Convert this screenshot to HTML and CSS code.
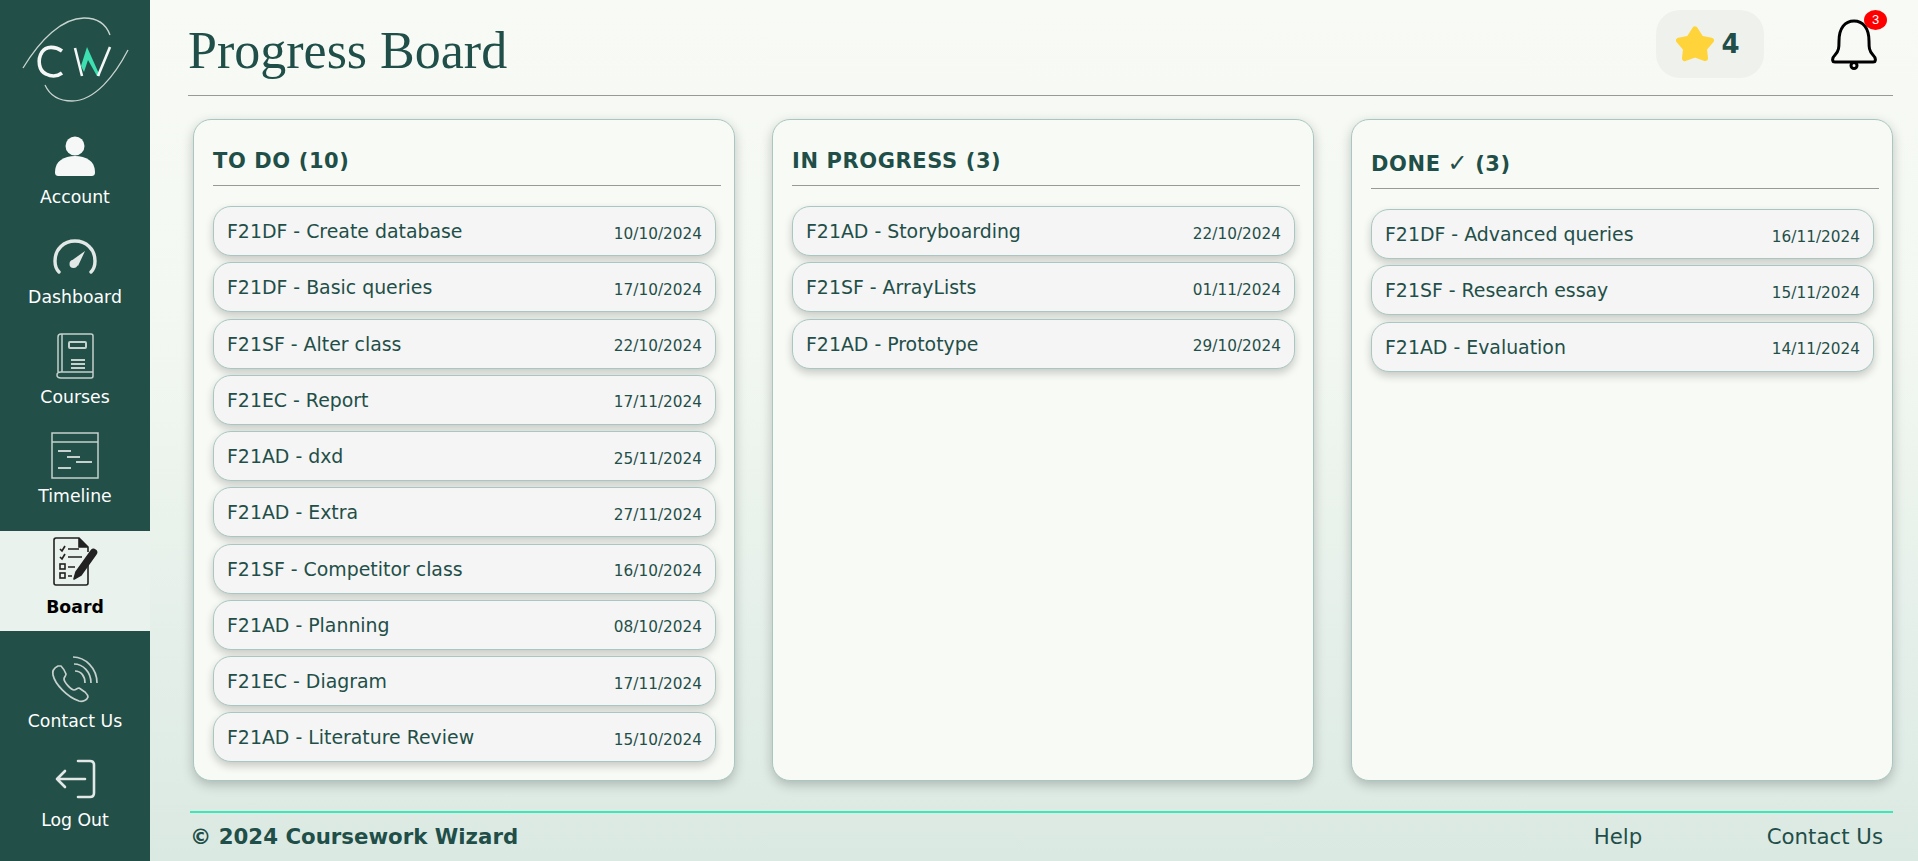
FILE: index.html
```html
<!DOCTYPE html>
<html lang="en">
<head>
    <meta charset="UTF-8">
    <meta name="viewport" content="width=device-width, initial-scale=1.0">
    <title>Progress Board</title>
    <link rel="stylesheet" href="styles.css">
</head>
<body>
    <nav class="sidebar">
        <div class="logo">
            <svg width="112" height="90" viewBox="20 15 112 90" fill="none">
                <path d="M23 68C40 40 62 18 84 18C98 18 106 24 110 35" stroke="#c9d4d0" stroke-width="1.3"/>
                <path d="M45 85C50 96 60 101 72 101C95 101 115 75 128 50" stroke="#c9d4d0" stroke-width="1.3"/>
                <path d="M62 51C55 46 46 46 42 52C37 60 39 71 46 74C52 77 58 76 62 73" stroke="#f4f7f5" stroke-width="3.6"/>
                <path d="M75 48L82 76" stroke="#f4f7f5" stroke-width="2.6"/>
                <path d="M81 66L87 47L100 76H97L88 60L84 72Z" fill="#3de0b0"/>
                <path d="M98 76L110 47" stroke="#f4f7f5" stroke-width="2.6"/>
            </svg>
        </div>
        <a class="nav-item" href="#">
            <svg class="nav-icon" viewBox="0 0 50 50"><circle cx="25" cy="15" r="9.5" fill="#f6f8f7"/><path d="M5 41C5 30 14 25 25 25S45 30 45 41C45 44 44 45 41 45H9C6 45 5 44 5 41Z" fill="#f6f8f7"/></svg>
            <span>Account</span>
        </a>
        <a class="nav-item" href="#">
            <svg class="nav-icon" viewBox="0 0 50 50" fill="none"><path d="M9 41C6 38 5 34 5 30C5 18 14 10 25 10S45 18 45 30C45 34 44 38 41 41" stroke="#e2e8e5" stroke-width="3.4" stroke-linecap="round"/><path d="M35 20L28 35L21 30Z" fill="#e2e8e5"/><circle cx="23.500" cy="33" r="4" fill="#e2e8e5"/></svg>
            <span>Dashboard</span>
        </a>
        <a class="nav-item" href="#">
            <svg class="nav-icon" viewBox="0 0 50 50" fill="none" stroke="#c6d0cc" stroke-width="1.5"><path d="M8 41V6C8 4 9 3 11 3H41C42 3 43 4 43 5V45C43 46 42 47 41 47H11C9 47 7 46 7 44C7 42 9 41 11 41H43"/><path d="M12 3V41"/><rect x="19" y="11" width="17" height="6" rx="1" stroke-width="2"/><path d="M21 29H35M21 33H35M21 37H35" stroke-width="1.8"/></svg>
            <span>Courses</span>
        </a>
        <a class="nav-item nav-item-timeline" href="#">
            <svg class="nav-icon" viewBox="0 0 50 50" fill="none" stroke="#c6d0cc" stroke-width="1.5"><rect x="2" y="3" width="46" height="45"/><path d="M2 12H48"/><path d="M8 21H21M17 27H30M26 32H42M8 38H21" stroke-width="2.2"/></svg>
            <span>Timeline</span>
        </a>
        <a class="nav-item active" href="#">
            <svg class="nav-icon" viewBox="0 0 50 50" fill="none" stroke="#222" stroke-width="1.6"><path d="M38 24V44C38 45 37 46 36 46H6C5 46 4 45 4 44V1C4 0 5 -1 6 -1H29L38 8V13"/><path d="M29 -1V8H38" fill="#222"/><path d="M10 10L12 12L15 7M10 18L12 20L15 15" stroke-width="1.7"/><path d="M18 10H29M18 18H32M18 28H25M18 37H22" stroke-width="1.7"/><rect x="10" y="25" width="5" height="5"/><rect x="10" y="34" width="5" height="5"/><path d="M24 40L26 33L41 12C42 10 44 10 45 11C47 12 47 14 46 15L31 36Z" fill="#222" stroke-linejoin="round"/></svg>
            <span>Board</span>
        </a>
        <a class="nav-item nav-item-contact" href="#">
            <svg class="nav-icon" viewBox="0 0 50 50" fill="none" stroke="#c6d0cc" stroke-width="1.7"><path d="M8 12C4 14 2 17 3 21C5 30 17 43 29 47C33 48 37 46 38 43C38 41 37 40 35 38C33 37 31 35 29 34C27 34 26 36 24 36C21 36 14 28 14 25C14 23 16 22 16 20C15 17 13 14 11 12C10 12 9 12 8 12Z"/><path d="M23 3C35 3 47 14 47 29"/><path d="M24 10C33 10 41 18 41 29"/><path d="M25 17C31 17 35 22 35 29"/></svg>
            <span>Contact Us</span>
        </a>
        <a class="nav-item" href="#">
            <svg class="nav-icon" viewBox="0 0 50 50" fill="none" stroke="#e2e8e5" stroke-width="2.6" stroke-linecap="round" stroke-linejoin="round"><path d="M28 7H40C43 7 44 9 44 11V39C44 41 43 43 40 43H28"/><path d="M7 25H35M15 17L7 25L15 33"/></svg>
            <span>Log Out</span>
        </a>
    </nav>

    <div class="main">
        <header class="topbar">
            <h1>Progress Board</h1>
            <div class="topbar-right">
                <div class="stars">
                    <svg width="38" height="36" viewBox="1.500 2.500 35 32.500"><path d="M19 5L24.500 13.500L34 15.500L27.500 23L28.500 32L19 28.500L9.500 32L10.500 23L4 15.500L13.500 13.500Z" fill="#ffd43b" stroke="#ffd43b" stroke-width="5" stroke-linejoin="round"/></svg>
                    <span>4</span>
                </div>
                <div class="bell">
                    <svg width="48" height="52" viewBox="0 0 48 52" fill="none" stroke="#000" stroke-width="3" stroke-linejoin="round"><path d="M3 42C2 40 3 38 5 36C9 32 9 28 9 22C9 9 15 2 24 2S39 9 39 22C39 28 39 32 43 36C45 38 46 40 45 42C45 43 44 43 43 43H5C4 43 3 43 3 42Z"/><circle cx="24" cy="46.500" r="3"/></svg>
                    <span class="badge">3</span>
                </div>
            </div>
        </header>

        <section class="board">
            <div class="column">
                <h2>TO DO (10)</h2>
                <div class="task"><span class="task-name">F21DF - Create database</span><span class="task-date">10/10/2024</span></div>
                <div class="task"><span class="task-name">F21DF - Basic queries</span><span class="task-date">17/10/2024</span></div>
                <div class="task"><span class="task-name">F21SF - Alter class</span><span class="task-date">22/10/2024</span></div>
                <div class="task"><span class="task-name">F21EC - Report</span><span class="task-date">17/11/2024</span></div>
                <div class="task"><span class="task-name">F21AD - dxd</span><span class="task-date">25/11/2024</span></div>
                <div class="task"><span class="task-name">F21AD - Extra</span><span class="task-date">27/11/2024</span></div>
                <div class="task"><span class="task-name">F21SF - Competitor class</span><span class="task-date">16/10/2024</span></div>
                <div class="task"><span class="task-name">F21AD - Planning</span><span class="task-date">08/10/2024</span></div>
                <div class="task"><span class="task-name">F21EC - Diagram</span><span class="task-date">17/11/2024</span></div>
                <div class="task"><span class="task-name">F21AD - Literature Review</span><span class="task-date">15/10/2024</span></div>
            </div>
            <div class="column">
                <h2>IN PROGRESS (3)</h2>
                <div class="task"><span class="task-name">F21AD - Storyboarding</span><span class="task-date">22/10/2024</span></div>
                <div class="task"><span class="task-name">F21SF - ArrayLists</span><span class="task-date">01/11/2024</span></div>
                <div class="task"><span class="task-name">F21AD - Prototype</span><span class="task-date">29/10/2024</span></div>
            </div>
            <div class="column column-done">
                <h2>DONE <span class="check">✓</span> (3)</h2>
                <div class="task"><span class="task-name">F21DF - Advanced queries</span><span class="task-date">16/11/2024</span></div>
                <div class="task"><span class="task-name">F21SF - Research essay</span><span class="task-date">15/11/2024</span></div>
                <div class="task"><span class="task-name">F21AD - Evaluation</span><span class="task-date">14/11/2024</span></div>
            </div>
        </section>

        <footer class="footer">
            <strong>© 2024 Coursework Wizard</strong>
            <div class="footer-links">
                <a href="#">Help</a>
                <a href="#">Contact Us</a>
            </div>
        </footer>
    </div>
</body>
</html>
```

FILE: styles.css
```css
* {
    box-sizing: border-box;
}

body {
    margin: 0;
    height: 861px;
    overflow: hidden;
    display: flex;
    font-family: 'DejaVu Sans', Verdana, sans-serif;
    color: #1f4f48;
    background: linear-gradient(to bottom, #f8fbf5 0%, #f4f8f2 35%, #dbe9e3 100%);
}

a {
    color: inherit;
    text-decoration: none;
}

.sidebar {
    width: 150px;
    flex-shrink: 0;
    background-color: #224f48;
    display: flex;
    flex-direction: column;
}

.logo {
    height: 118px;
    padding: 15px 0 0 20px;
}

.nav-item {
    height: 100px;
    flex-shrink: 0;
    display: flex;
    flex-direction: column;
    align-items: center;
    padding-top: 13px;
    color: #fff;
    font-size: 17.300px;
}

.nav-item span {
    margin-top: 6px;
    line-height: 20px;
}

.nav-item-timeline {
    margin-top: -1px;
}

.nav-item-contact span {
    margin-top: 7px;
}

.nav-icon {
    width: 50px;
    height: 50px;
    overflow: visible;
}

.nav-item.active {
    margin: 14px 0 10px;
    padding-top: 8px;
    background-color: #e9f2ec;
    color: #000;
    font-weight: bold;
}

.nav-item.active span {
    margin-top: 8px;
}

.main {
    flex: 1;
    min-width: 0;
    display: flex;
    flex-direction: column;
    padding: 0 25px 0 38px;
}

.topbar {
    height: 96px;
    flex-shrink: 0;
    display: flex;
    justify-content: space-between;
    border-bottom: 1px solid #999;
}

h1 {
    margin: 0;
    padding-top: 21px;
    font-family: 'Liberation Serif', Georgia, serif;
    font-weight: normal;
    font-size: 52px;
    line-height: 60px;
}

.topbar-right {
    display: flex;
    align-items: flex-start;
}

.stars {
    margin-top: 10px;
    width: 108px;
    height: 68px;
    border-radius: 24px;
    background-color: #eff2ec;
    display: flex;
    align-items: center;
    justify-content: center;
    gap: 7px;
    padding-right: 4px;
    font-size: 26px;
    font-weight: bold;
}

.bell {
    position: relative;
    width: 48px;
    height: 52px;
    margin: 19px 15px 0 66px;
}

.badge {
    position: absolute;
    top: -9px;
    right: -9px;
    width: 23px;
    height: 20px;
    border-radius: 50%;
    background-color: #f00;
    color: #fff;
    font-family: 'Liberation Sans', Arial, sans-serif;
    font-size: 13px;
    line-height: 20px;
    text-align: center;
}

.board {
    flex-shrink: 0;
    display: grid;
    grid-template-columns: repeat(3, 542px);
    justify-content: space-between;
    padding: 23px 0 0 5px;
}

.column {
    height: 662px;
    padding: 23px 19px 0;
    background-color: #f8fbf5;
    border: 1px solid #a9c7c2;
    border-radius: 18px;
    box-shadow: 0 4px 12px rgba(0, 0, 0, 0.22);
}

.column h2 {
    margin: 0 0 20px;
    padding-top: 6px;
    height: 43px;
    width: 508px;
    border-bottom: 1px solid #999;
    font-size: 21px;
    line-height: 24px;
    letter-spacing: 0.6px;
}

.check {
    margin: 0 -1px;
    font-size: 24px;
    font-weight: normal;
    line-height: 20px;
}

.column-done {
    padding-top: 26px;
}

.task {
    width: 503px;
    height: 50px;
    margin-bottom: 6.270px;
    padding: 0 13px;
    display: flex;
    justify-content: space-between;
    align-items: center;
    background-color: #f5f5f5;
    border: 1px solid #a9c7c2;
    border-radius: 18px;
    box-shadow: 0 4px 8px rgba(0, 0, 0, 0.2);
}

.task-name {
    font-size: 18.900px;
}

.task-date {
    font-size: 15.300px;
    padding-top: 5px;
}

.footer {
    height: 50px;
    flex-shrink: 0;
    display: flex;
    justify-content: space-between;
    align-items: flex-start;
    margin: 30px 0 0 2px;
    padding: 11px 10px 0 0;
    border-top: 2px solid #3de8b8;
    font-size: 21.300px;
}

.footer-links {
    display: flex;
    gap: 124.500px;
}
```
